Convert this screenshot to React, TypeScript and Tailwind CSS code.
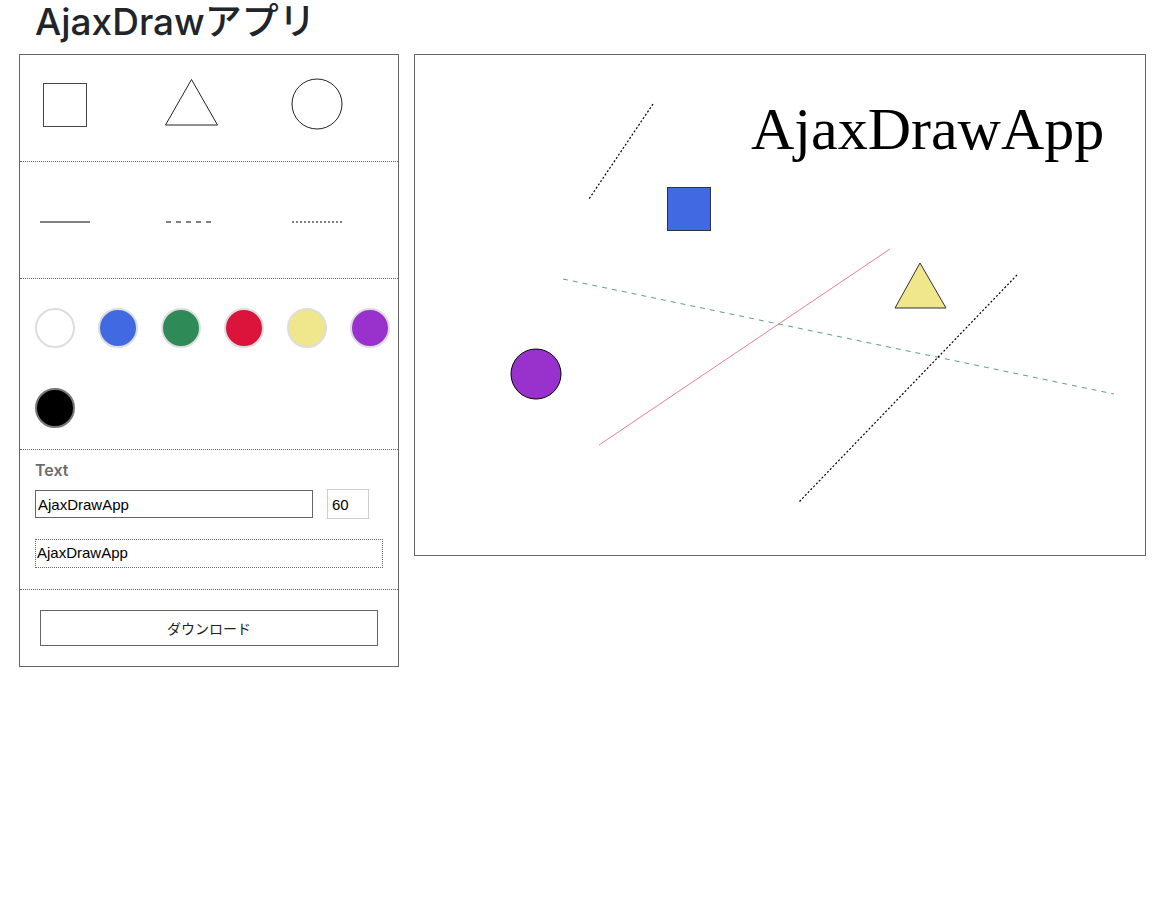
import React from "react";

const colors = [
  { c: "#ffffff", b: "border-[#dddddd]" },
  { c: "#4169e1", b: "border-[#dddddd]" },
  { c: "#2e8b57", b: "border-[#dddddd]" },
  { c: "#dc143c", b: "border-[#dddddd]" },
  { c: "#f0e68c", b: "border-[#dddddd]" },
  { c: "#9932cc", b: "border-[#dddddd]" },
  { c: "#000000", b: "border-[#777777]" },
];

export default function App() {
  return (
    <div className="min-h-[903px] bg-white text-[#212529]">
      <h1
        className="pl-[35px] text-[37px] leading-[44px] font-medium"
        style={{ fontFamily: 'Inter, "Noto Sans CJK JP", sans-serif' }}
      >
        AjaxDrawアプリ
      </h1>
      <div className="mt-[10px] flex items-start gap-[15px] pl-[19px]">
        {/* left panel */}
        <div className="w-[380px] border border-[#666666]">
          {/* shapes */}
          <div className="h-[107px] border-b border-dotted border-[#666666] grid grid-cols-3 pt-[24px]">
            <div className="pl-[20px]">
              <svg width="50" height="50" className="overflow-visible">
                <rect x="3.5" y="4.5" width="43" height="43" fill="white" stroke="#444" strokeWidth="1" />
              </svg>
            </div>
            <div className="pl-[20px]">
              <svg width="54" height="50" className="overflow-visible">
                <polygon points="25.5,0.5 -0.5,46 51.5,46" fill="white" stroke="#222" strokeWidth="1" />
              </svg>
            </div>
            <div className="pl-[20px]">
              <svg width="50" height="50" className="overflow-visible">
                <circle cx="25" cy="25" r="25" fill="white" stroke="#222" strokeWidth="1" />
              </svg>
            </div>
          </div>
          {/* line styles */}
          <div className="h-[117px] border-b border-dotted border-[#666666] grid grid-cols-3 pt-[59px]">
            <div className="pl-[20px] flex">
              <svg width="50" height="2">
                <line x1="0" y1="1" x2="50" y2="1" stroke="#808080" strokeWidth="2" />
              </svg>
            </div>
            <div className="pl-[20px] flex">
              <svg width="45" height="2">
                <line x1="0" y1="1" x2="45" y2="1" stroke="#808080" strokeWidth="2" strokeDasharray="5 5" />
              </svg>
            </div>
            <div className="pl-[20px] flex">
              <svg width="50" height="2">
                <line x1="0" y1="1" x2="50" y2="1" stroke="#808080" strokeWidth="2" strokeDasharray="2 2" />
              </svg>
            </div>
          </div>
          {/* colors */}
          <div className="h-[171px] border-b border-dotted border-[#666666] pt-[29px] pl-[15px]">
            <div className="flex flex-wrap gap-x-[23px] gap-y-[40px] w-[362px]">
              {colors.map((c, i) => (
                <div
                  key={i}
                  className={`w-[40px] h-[40px] rounded-full border-2 ${c.b}`}
                  style={{ backgroundColor: c.c }}
                />
              ))}
            </div>
          </div>
          {/* text */}
          <div className="h-[140px] border-b border-dotted border-[#666666] pt-[8px] pl-[15px]">
            <div
              className="text-[16px] leading-[24px] font-semibold text-[#6c6c6c]"
              style={{ fontFamily: 'Inter, sans-serif' }}
            >
              Text
            </div>
            <div className="mt-[7px] flex items-center gap-[14px]" style={{ fontFamily: '"Liberation Sans", Arial, sans-serif' }}>
              <input
                readOnly
                value="AjaxDrawApp"
                className="w-[278px] h-[28px] border border-[#666666] px-[2px] text-[15px] text-black outline-none"
              />
              <input
                readOnly
                value="60"
                className="w-[42px] h-[30px] border border-[#cccccc] px-[4px] text-[15px] text-black outline-none"
              />
            </div>
            <div
              className="mt-[20px] w-[348px] h-[29px] border border-dotted border-[#666666] px-[1px] text-[15px] leading-[26px] text-black"
              style={{ fontFamily: '"Liberation Sans", Arial, sans-serif' }}
            >
              AjaxDrawApp
            </div>
          </div>
          {/* download */}
          <div className="h-[76px] pt-[20px] px-[20px]">
            <button
              className="w-full h-[36px] border border-[#666666] bg-white text-[14px] text-[#222]"
              style={{ fontFamily: '"Noto Sans CJK JP", sans-serif' }}
            >
              ダウンロード
            </button>
          </div>
        </div>
        {/* canvas */}
        <div className="w-[732px] h-[502px] border border-[#666666] bg-white">
          <svg width="730" height="500" viewBox="0 0 730 500">
            <line x1="238" y1="49" x2="174" y2="144" stroke="#000" strokeWidth="1.2" strokeDasharray="2 2" />
            <rect x="252.5" y="132.5" width="43" height="43" fill="#4169e1" stroke="#333" strokeWidth="1" />
            <text x="336" y="94" fontFamily='"Liberation Serif", "Times New Roman", serif' fontSize="60" fill="#000">
              AjaxDrawApp
            </text>
            <line x1="184" y1="390" x2="475" y2="194" stroke="#dc143c" strokeOpacity="0.55" strokeWidth="1" />
            <line x1="148" y1="224" x2="699" y2="339" stroke="#2e8b57" strokeOpacity="0.8" strokeWidth="1" strokeDasharray="5 5" />
            <line x1="602" y1="220" x2="384" y2="447" stroke="#000" strokeWidth="1.2" strokeDasharray="2 2" />
            <polygon points="505,208 480,253 531,253" fill="#f0e68c" stroke="#333" strokeWidth="1" />
            <circle cx="121" cy="319" r="25" fill="#9932cc" stroke="#000" strokeWidth="1" />
          </svg>
        </div>
      </div>
    </div>
  );
}
